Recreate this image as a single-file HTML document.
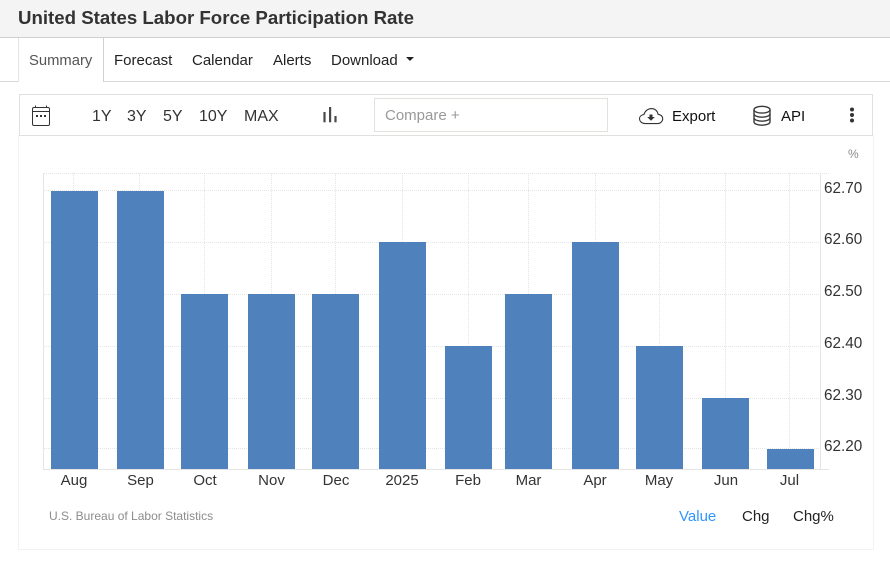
<!DOCTYPE html>
<html>
<head>
<meta charset="utf-8">
<style>
html,body{margin:0;padding:0;background:#fff;}
body{width:890px;height:580px;position:relative;overflow:hidden;font-family:"Liberation Sans",sans-serif;}
.a{position:absolute;white-space:nowrap;}
svg{position:absolute;left:0;top:0;}
</style>
</head>
<body>
<div class="a" style="left:0;top:0;width:890px;height:37px;background:#f4f4f4;border-bottom:1px solid #d0d0d0;"></div>
<div class="a" style="left:18px;top:7px;font-size:18.67px;line-height:21px;font-weight:bold;color:#333;">United States Labor Force Participation Rate</div>

<div class="a" style="left:0;top:81px;width:890px;height:1px;background:#d8d8d8;"></div>
<div class="a" style="left:18px;top:38px;width:84px;height:44px;background:#fff;border-left:1px solid #e4e4e4;border-right:1px solid #d0d0d0;"></div>
<div class="a" style="left:29px;top:53px;font-size:14.8px;line-height:17px;color:#555;">Summary</div>
<div class="a" style="left:114px;top:52px;font-size:15px;line-height:17px;color:#222;">Forecast</div>
<div class="a" style="left:192px;top:52px;font-size:15px;line-height:17px;color:#222;">Calendar</div>
<div class="a" style="left:273px;top:52px;font-size:15px;line-height:17px;color:#222;">Alerts</div>
<div class="a" style="left:331px;top:52px;font-size:15px;line-height:17px;color:#222;">Download</div>
<div class="a" style="left:406px;top:57px;width:0;height:0;border-left:4px solid transparent;border-right:4px solid transparent;border-top:4px solid #222;"></div>

<div class="a" style="left:18px;top:135px;width:854px;height:414px;border:1px solid #f2f2f2;border-top:0;"></div>
<div class="a" style="left:19px;top:94px;width:852px;height:40px;border:1px solid #e0e0e0;"></div>

<div class="a" style="left:92px;top:108px;font-size:16px;line-height:18px;color:#333;">1Y</div>
<div class="a" style="left:127px;top:108px;font-size:16px;line-height:18px;color:#333;">3Y</div>
<div class="a" style="left:163px;top:108px;font-size:16px;line-height:18px;color:#333;">5Y</div>
<div class="a" style="left:199px;top:108px;font-size:16px;line-height:18px;color:#333;">10Y</div>
<div class="a" style="left:244px;top:108px;font-size:16px;line-height:18px;color:#333;">MAX</div>

<div class="a" style="left:374px;top:98px;width:232px;height:32px;border:1px solid #e2e2dc;"></div>
<div class="a" style="left:385px;top:107px;font-size:15px;line-height:17px;color:#999;">Compare +</div>

<div class="a" style="left:672px;top:108px;font-size:15px;line-height:17px;color:#111;">Export</div>
<div class="a" style="left:781px;top:108px;font-size:15px;line-height:17px;color:#111;">API</div>

<svg width="890" height="580" viewBox="0 0 890 580" xmlns="http://www.w3.org/2000/svg">
  <!-- calendar -->
  <g fill="none" stroke="#333" stroke-width="1">
    <rect x="32.500" y="107.500" width="17" height="18" rx="1.500"/>
    <path d="M32.500 111.500H49.500M35.500 105.500V107.500M46.500 105.500V107.500"/>
  </g>
  <g fill="#333"><rect x="36" y="115" width="2" height="2"/><rect x="40" y="115" width="2" height="2"/><rect x="44" y="115" width="2" height="2"/></g>
  <!-- bar chart icon -->
  <g fill="#4a4a4a"><rect x="323.400" y="112" width="2.200" height="10.300"/><rect x="329" y="107" width="2.200" height="15.300"/><rect x="334.400" y="116" width="2.200" height="6.300"/></g>
  <!-- cloud -->
  <path d="M645 123.600C641.500 123.600 639.500 121 639.500 118.700C639.500 116.400 641.500 114.900 644 114.500C645 111 648 108.600 651.500 108.600C655 108.600 657.500 111 658 114.200C660.800 114.800 662.700 116.500 662.700 118.800C662.700 121.300 660.500 123.600 657.500 123.600Z" fill="none" stroke="#333" stroke-width="1.100"/>
  <path d="M649.500 114.500H652.500V117H654.800L651 120.700L647.200 117H649.500Z" fill="#333"/>
  <!-- database -->
  <g fill="none" stroke="#3a3a3a" stroke-width="1.400">
    <ellipse cx="762" cy="109.700" rx="8" ry="3.400"/>
    <path d="M754 109.700V121.700C754 123.900 758 125.200 762 125.200C766 125.200 770 123.900 770 121.700V109.700"/>
    <path d="M754 113.700C754 115.900 758 117.200 762 117.200C766 117.200 770 115.900 770 113.700"/>
    <path d="M754 117.700C754 119.900 758 121.200 762 121.200C766 121.200 770 119.900 770 117.700"/>
  </g>
  <!-- kebab -->
  <g fill="#333"><circle cx="852" cy="109.500" r="2"/><circle cx="852" cy="115" r="2"/><circle cx="852" cy="120.500" r="2"/></g>

  <!-- grid -->
  <g stroke="#e4e4e4" stroke-width="1" stroke-dasharray="1 1" fill="none" shape-rendering="crispEdges">
    <path d="M44 173.500H829M44 190.500H820M44 242.500H820M44 294.500H820M44 346.500H820M44 398.500H820M44 448.500H820"/>
    <path d="M73.500 173V469M139.500 173V469M204.500 173V469M271.500 173V469M335.500 173V469M402.500 173V469M468.500 173V469M528.500 173V469M595.500 173V469M659.500 173V469M725.500 173V469M789.500 173V469"/>
  </g>
  <path d="M43.500 173V469.500H829M820.500 173V469" fill="none" stroke="#e4e4e4" stroke-width="1"/>

  <!-- bars -->
  <g fill="#4f81bd">
    <rect x="51" y="191" width="47" height="278"/>
    <rect x="117" y="191" width="47" height="278"/>
    <rect x="181" y="294" width="47" height="175"/>
    <rect x="248" y="294" width="47" height="175"/>
    <rect x="312" y="294" width="47" height="175"/>
    <rect x="379" y="242" width="47" height="227"/>
    <rect x="445" y="346" width="47" height="123"/>
    <rect x="505" y="294" width="47" height="175"/>
    <rect x="572" y="242" width="47" height="227"/>
    <rect x="636" y="346" width="47" height="123"/>
    <rect x="702" y="398" width="47" height="71"/>
    <rect x="767" y="449" width="47" height="20"/>
  </g>

  <g font-family="'Liberation Sans',sans-serif" font-size="15" fill="#333">
    <g text-anchor="middle">
      <text x="74" y="485">Aug</text>
      <text x="140.500" y="485">Sep</text>
      <text x="205" y="485">Oct</text>
      <text x="271.500" y="485">Nov</text>
      <text x="336" y="485">Dec</text>
      <text x="402" y="485">2025</text>
      <text x="468" y="485">Feb</text>
      <text x="528.500" y="485">Mar</text>
      <text x="595" y="485">Apr</text>
      <text x="659" y="485">May</text>
      <text x="726" y="485">Jun</text>
      <text x="789.500" y="485">Jul</text>
    </g>
    <g font-size="15.300">
      <text x="824" y="193">62.70</text>
      <text x="824" y="244">62.60</text>
      <text x="824" y="296">62.50</text>
      <text x="824" y="348">62.40</text>
      <text x="824" y="400">62.30</text>
      <text x="824" y="451">62.20</text>
    </g>
  </g>
  <text x="848" y="158" font-family="'Liberation Sans',sans-serif" font-size="12" fill="#8a8a8a">%</text>
  <text x="49" y="520" font-family="'Liberation Sans',sans-serif" font-size="12" fill="#8c8c8c">U.S. Bureau of Labor Statistics</text>
  <g font-family="'Liberation Sans',sans-serif" font-size="15">
    <text x="679" y="521" fill="#2f96ff">Value</text>
    <text x="742" y="521" fill="#222">Chg</text>
    <text x="793" y="521" fill="#222">Chg%</text>
  </g>
</svg>
</body>
</html>
